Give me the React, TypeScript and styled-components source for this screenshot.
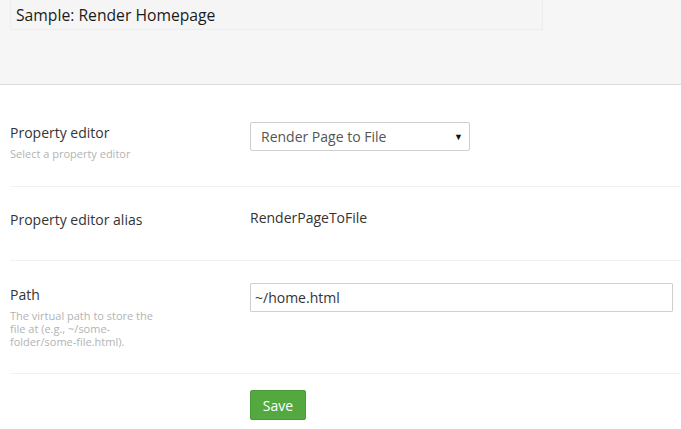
import React from "react";
import styled, { createGlobalStyle } from "styled-components";

const Global = createGlobalStyle`
  html, body { margin: 0; padding: 0; background: #fff; }
  body { font-family: "Open Sans", "Liberation Sans", sans-serif; color: #343434; }
`;

const Page = styled.div`
  width: 681px;
  height: 429px;
  overflow: hidden;
  display: flex;
  flex-direction: column;
`;

const Header = styled.div`
  flex-shrink: 0;
  height: 84px;
  background: #f6f6f6;
  border-bottom: 1px solid #dcdcdc;
  padding: 0 138px 0 10px;
  box-sizing: content-box;
`;

const TitleBox = styled.div`
  height: 29px;
  border: 1px solid #ededed;
  border-top: none;
  background: #f5f5f5;
  display: flex;
  align-items: center;
  padding-left: 5px;
  font-size: 15.7px;
  color: #1b1b1b;
`;

const Body = styled.div`
  flex-shrink: 0;
  padding: 24px 0 0 10px;
  display: flex;
  flex-direction: column;
`;

const Row = styled.div<{ $h: number; $last?: boolean }>`
  display: grid;
  grid-template-columns: 240px 1fr;
  height: ${(p) => p.$h}px;
  border-bottom: ${(p) => (p.$last ? "none" : "1px solid #f1f1f1")};
  box-sizing: border-box;
`;

const LabelCol = styled.div`
  display: flex;
  flex-direction: column;
`;

const Label = styled.div<{ $top: number }>`
  font-size: 14px;
  line-height: 20px;
  color: #343434;
  margin-top: ${(p) => p.$top}px;
`;

const Desc = styled.div`
  font-size: 11px;
  line-height: 13px;
  color: #b3b3b3;
  width: 150px;
  margin-top: 4px;
`;

const Control = styled.div<{ $top: number }>`
  margin-top: ${(p) => p.$top}px;
`;

const Select = styled.div`
  width: 220px;
  height: 29px;
  box-sizing: border-box;
  border: 1px solid #cfcfcf;
  border-radius: 2px;
  display: flex;
  align-items: center;
  justify-content: space-between;
  padding: 0 6px 0 10px;
  font-size: 14px;
  color: #555;
  background: #fff;
`;

const Arrow = styled.span`
  font-size: 9px;
  color: #111;
`;

const Value = styled.div`
  font-size: 14px;
  line-height: 20px;
  color: #333;
`;

const Input = styled.div`
  width: 423px;
  height: 29px;
  box-sizing: border-box;
  border: 1px solid #cfcfcf;
  border-radius: 1px;
  display: flex;
  align-items: center;
  padding-left: 4px;
  font-size: 14px;
  color: #333;
`;

const Button = styled.button`
  width: 56px;
  height: 30px;
  background: #53a93f;
  border: 1px solid #4a9a38;
  border-radius: 2px;
  color: #fff;
  font-family: "Open Sans", "Liberation Sans", sans-serif;
  font-size: 14px;
  padding: 0;
`;

export default function App() {
  return (
    <Page>
      <Global />
      <Header>
        <TitleBox>Sample: Render Homepage</TitleBox>
      </Header>
      <Body>
        <Row $h={78}>
          <LabelCol>
            <Label $top={14}>Property editor</Label>
            <Desc>Select a property editor</Desc>
          </LabelCol>
          <Control $top={13}>
            <Select>
              <span>Render Page to File</span>
              <Arrow>▼</Arrow>
            </Select>
          </Control>
        </Row>
        <Row $h={74}>
          <LabelCol>
            <Label $top={23}>Property editor alias</Label>
          </LabelCol>
          <Control $top={21}>
            <Value>RenderPageToFile</Value>
          </Control>
        </Row>
        <Row $h={113}>
          <LabelCol>
            <Label $top={24}>Path</Label>
            <Desc>The virtual path to store the file at (e.g., ~/some-folder/some-file.html).</Desc>
          </LabelCol>
          <Control $top={22}>
            <Input>~/home.html</Input>
          </Control>
        </Row>
        <Row $h={60} $last>
          <div />
          <Control $top={16}>
            <Button>Save</Button>
          </Control>
        </Row>
      </Body>
    </Page>
  );
}
